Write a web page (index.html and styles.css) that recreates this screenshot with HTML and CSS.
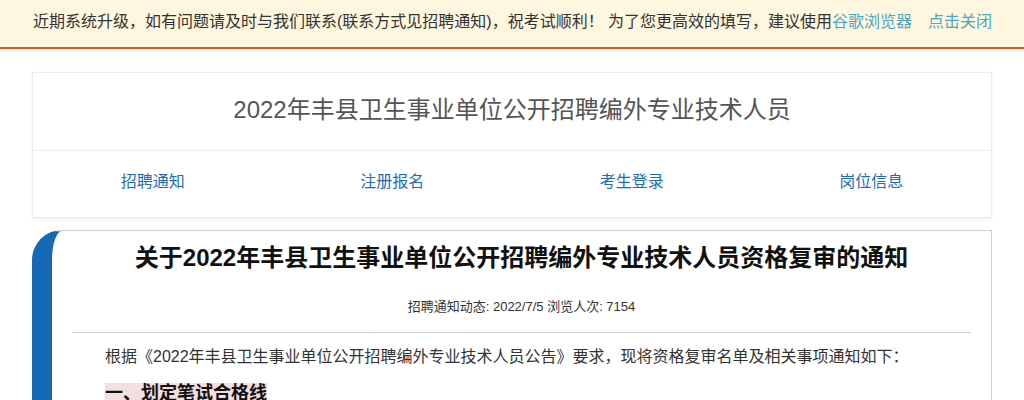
FILE: index.html
```html
<!DOCTYPE html>
<html lang="zh-CN">
<head>
<meta charset="utf-8">
<title>2022年丰县卫生事业单位公开招聘编外专业技术人员</title>
<link rel="stylesheet" href="styles.css">
</head>
<body>
<div class="notice">
  <span class="notice-text">近期系统升级，如有问题请及时与我们联系(联系方式见招聘通知)，祝考试顺利！ 为了您更高效的填写，建议使用<a class="notice-link" href="#">谷歌浏览器</a></span>
  <a class="notice-link" href="#">点击关闭</a>
</div>
<div class="container">
  <div class="header-card">
    <div class="site-title">2022年丰县卫生事业单位公开招聘编外专业技术人员</div>
    <nav class="nav">
      <a href="#">招聘通知</a>
      <a href="#">注册报名</a>
      <a href="#">考生登录</a>
      <a href="#">岗位信息</a>
    </nav>
  </div>
  <div class="article-card">
    <h1 class="article-title">关于2022年丰县卫生事业单位公开招聘编外专业技术人员资格复审的通知</h1>
    <div class="article-meta">招聘通知动态: 2022/7/5 浏览人次: 7154</div>
    <div class="article-body">
      <p class="para">根据《2022年丰县卫生事业单位公开招聘编外专业技术人员公告》要求，现将资格复审名单及相关事项通知如下：</p>
      <h2 class="section"><span class="mark">一、划定笔试合格线</span></h2>
    </div>
  </div>
</div>
</body>
</html>
```

FILE: styles.css
```css
* { box-sizing: border-box; }
body {
  margin: 0;
  background: #fff;
  font-family: "Liberation Sans", "Noto Sans CJK SC", sans-serif;
  color: #333;
  overflow: hidden;
}
a { text-decoration: none; }

.notice {
  height: 49px;
  background: #fef6de;
  border-bottom: 2px solid #e6531d;
  display: flex;
  align-items: center;
  justify-content: space-between;
  padding: 0 32px 3px 33px;
  font-size: 16px;
  line-height: 20px;
  color: #333;
}
.notice-link { color: #4aa7c6; }

.container {
  width: 960px;
  margin: 23px auto 0;
}

.header-card {
  border: 1px solid #ebebeb;
  box-shadow: 0 1px 3px rgba(0,0,0,0.08);
  background: #fff;
}
.site-title {
  height: 78px;
  border-bottom: 1px solid #ededed;
  display: flex;
  align-items: center;
  justify-content: center;
  font-size: 24px;
  line-height: 30px;
  color: #555;
  padding-bottom: 4px;
}
.nav {
  display: grid;
  grid-template-columns: repeat(4, 1fr);
  height: 66px;
  align-items: center;
  text-align: center;
  padding-bottom: 4px;
}
.nav a {
  color: #1f6db0;
  font-size: 16px;
  line-height: 20px;
}

.article-card {
  margin-top: 12px;
  border: 1px solid #cfcfcf;
  border-left: 20px solid #1569b4;
  border-top-left-radius: 30px;
  border-bottom: none;
  padding: 7px 20px 20px;
  height: 200px;
}
.article-title {
  margin: 0;
  text-align: center;
  font-size: 24px;
  font-weight: bold;
  color: #111;
  line-height: 40px;
}
.article-meta {
  text-align: center;
  font-size: 13px;
  color: #333;
  margin-top: 19px;
  line-height: 20px;
  padding-bottom: 15px;
  border-bottom: 1px solid #ccc;
}
.article-body { padding: 0 33px; }
.para {
  margin: 12px 0 0;
  font-size: 16px;
  line-height: 24px;
  color: #333;
}
.section {
  margin: 12px 0 0;
  font-size: 18px;
  font-weight: bold;
  color: #111;
  line-height: 24px;
}
.mark { background: #f4dede; }
```
